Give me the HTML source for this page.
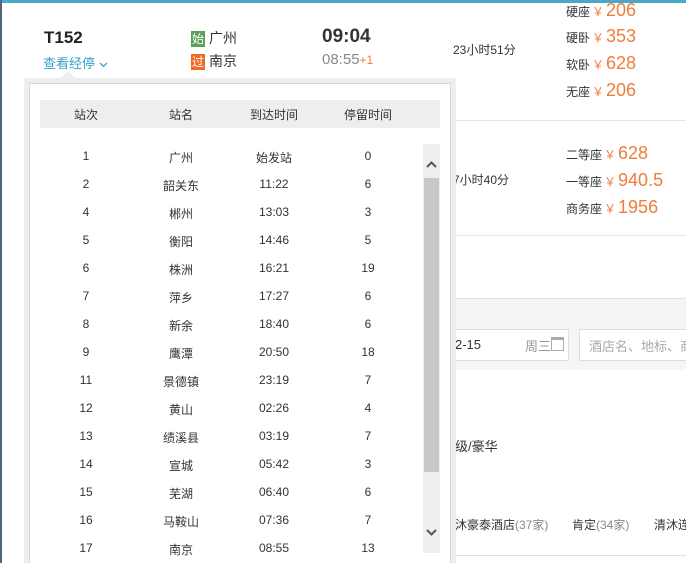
<!DOCTYPE html>
<html style="overflow:hidden;width:686px;height:563px"><head><meta charset="utf-8"><style>
*{margin:0;padding:0;box-sizing:border-box}
body{width:686px;height:563px;overflow:hidden;background:#fff;position:relative;font-family:"Liberation Sans","Noto Sans CJK SC",sans-serif;font-size:12px;color:#333}
.a{position:absolute;white-space:nowrap}
.p{color:#f07c3c;margin:0 2px}
.pr{font-size:18px;color:#f07c3c}
.tag{display:inline-block;width:14px;height:16px;color:#fff;font-size:12px;line-height:16px;text-align:center;margin-right:4px;vertical-align:middle}
.row{position:absolute;left:40px;width:384px;height:20px;font-size:12px;color:#333}
.row span{position:absolute;top:0;transform:translateX(-50%)}
</style></head><body>
<div class="a" style="left:0;top:0;width:686px;height:3px;background:#4aa8c8"></div>
<div class="a" style="left:0;top:0;width:2px;height:563px;background:#4d6878"></div>
<div class="a" style="left:44px;top:28px;font-size:17px;font-weight:bold;color:#222">T152</div>
<div class="a" style="left:43px;top:53px;font-size:13px;color:#3ba0c8">查看经停 <svg width="9" height="6" viewBox="0 0 9 6" style="vertical-align:middle"><path d="M1 1L4.5 4.5L8 1" fill="none" stroke="#3ba0c8" stroke-width="1.3"/></svg></div>
<div class="a" style="left:191px;top:28px;font-size:14px"><span class="tag" style="background:#5c9e5c">始</span>广州</div>
<div class="a" style="left:191px;top:51px;font-size:14px"><span class="tag" style="background:#f06a26">过</span>南京</div>
<div class="a" style="left:322px;top:26px;font-size:19px;font-weight:bold;color:#333">09:04</div>
<div class="a" style="left:322px;top:51px;font-size:15px;color:#888">08:55<span style="color:#f07c3c;font-size:12px">+1</span></div>
<div class="a" style="left:453px;top:41px;font-size:12px">23小时51分</div>
<div class="a" style="left:566px;top:0px">硬座<span class="p">￥</span><span class="pr">206</span></div>
<div class="a" style="left:566px;top:26px">硬卧<span class="p">￥</span><span class="pr">353</span></div>
<div class="a" style="left:566px;top:53px">软卧<span class="p">￥</span><span class="pr">628</span></div>
<div class="a" style="left:566px;top:80px">无座<span class="p">￥</span><span class="pr">206</span></div>
<div class="a" style="left:450px;top:120px;width:236px;height:1px;background:#e6e6e6"></div>
<div class="a" style="left:453px;top:171px">7小时40分</div>
<div class="a" style="left:566px;top:143px">二等座<span class="p">￥</span><span class="pr">628</span></div>
<div class="a" style="left:566px;top:170px">一等座<span class="p">￥</span><span class="pr">940.5</span></div>
<div class="a" style="left:566px;top:197px">商务座<span class="p">￥</span><span class="pr">1956</span></div>
<div class="a" style="left:450px;top:235px;width:236px;height:1px;background:#e6e6e6"></div>
<div class="a" style="left:450px;top:298px;width:236px;height:72px;background:#f5f5f5;border-top:1px solid #e0e0e0"></div>
<div class="a" style="left:440px;top:329px;width:129px;height:32px;background:#fff;border:1px solid #ddd"></div>
<div class="a" style="left:455px;top:337px;font-size:13px">2-15</div>
<div class="a" style="left:525px;top:336px;font-size:13px;color:#999">周三</div>
<div class="a" style="left:551px;top:337px;width:13px;height:14px;border:1px solid #aaa;border-top-width:3px"></div>
<div class="a" style="left:579px;top:329px;width:110px;height:32px;background:#fff;border:1px solid #ddd"></div>
<div class="a" style="left:589px;top:336px;font-size:13px;color:#aaa">酒店名、地标、商圈</div>
<div class="a" style="left:455px;top:436px;font-size:13px">级/豪华</div>
<div class="a" style="left:455px;top:516px;font-size:12px">沐豪泰酒店<span style="color:#888">(37家)</span></div>
<div class="a" style="left:572px;top:516px;font-size:12px">肯定<span style="color:#888">(34家)</span></div>
<div class="a" style="left:654px;top:516px;font-size:12px">清沐连</div>
<div class="a" style="left:450px;top:555px;width:236px;height:1px;background:#e0e0e0"></div>
<!-- popup -->
<div class="a" style="left:24px;top:78px;width:432px;height:485px;background:#eee"></div>
<div class="a" style="left:29px;top:83px;width:422px;height:490px;background:#fff;border:1px solid #d8d8d8"></div>
<div class="a" style="left:61px;top:71px;width:0;height:0;border-left:7px solid transparent;border-right:7px solid transparent;border-bottom:7px solid #eee"></div>
<div class="a" style="left:40px;top:100px;width:400px;height:28px;background:#eee"></div>
<div class="row" style="top:106px"><span style="left:46px">站次</span><span style="left:141px">站名</span><span style="left:234px">到达时间</span><span style="left:328px">停留时间</span></div>
<div class="a" style="left:423px;top:144px;width:17px;height:409px;background:#eee"></div>
<div class="a" style="left:424px;top:178px;width:15px;height:294px;background:#c8c8c8"></div>
<svg class="a" style="left:425px;top:160px" width="13" height="9" viewBox="0 0 13 9"><path d="M2 7L6.5 2.5L11 7" fill="none" stroke="#555" stroke-width="2"/></svg>
<svg class="a" style="left:425px;top:528px" width="13" height="9" viewBox="0 0 13 9"><path d="M2 2L6.5 6.5L11 2" fill="none" stroke="#555" stroke-width="2"/></svg>
<div id="rows"></div>
<script>
var d=[["1","广州","始发站","0"],["2","韶关东","11:22","6"],["4","郴州","13:03","3"],["5","衡阳","14:46","5"],["6","株洲","16:21","19"],["7","萍乡","17:27","6"],["8","新余","18:40","6"],["9","鹰潭","20:50","18"],["11","景德镇","23:19","7"],["12","黄山","02:26","4"],["13","绩溪县","03:19","7"],["14","宣城","05:42","3"],["15","芜湖","06:40","6"],["16","马鞍山","07:36","7"],["17","南京","08:55","13"]];
var h="";d.forEach(function(r,i){h+='<div class="row" style="top:'+(149+i*28)+'px"><span style="left:46px">'+r[0]+'</span><span style="left:141px">'+r[1]+'</span><span style="left:234px">'+r[2]+'</span><span style="left:328px">'+r[3]+'</span></div>';});
document.getElementById("rows").innerHTML=h;
</script>
</body></html>
